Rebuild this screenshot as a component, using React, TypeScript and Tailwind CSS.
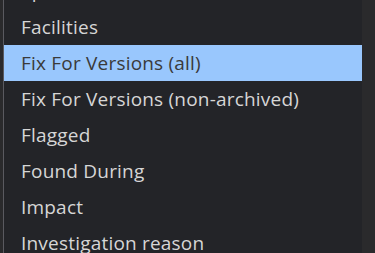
const items = [
  "Epic Link",
  "Facilities",
  "Fix For Versions (all)",
  "Fix For Versions (non-archived)",
  "Flagged",
  "Found During",
  "Impact",
  "Investigation reason",
];

const selected = "Fix For Versions (all)";

export default function App() {
  return (
    <div className="flex h-[253px] w-[375px] overflow-hidden bg-[#2a2a2c]">
      <div className="ml-[3px] w-px shrink-0 bg-[#5a5a60]" />
      <div className="h-full w-[358px] overflow-hidden bg-[#232428]">
        <ul className="-mt-[27px] flex flex-col">
          {items.map((item) => (
            <li
              key={item}
              className={
                item === selected
                  ? "flex h-9 items-center bg-[#99c7fd] pl-[17px] text-[19px] tracking-[0.2px] text-[#3a3a3a]"
                  : "flex h-9 items-center pl-[17px] text-[19px] tracking-[0.2px] text-[#d6d6d6]"
              }
              style={{ fontFamily: '"Open Sans", "Noto Sans", sans-serif' }}
            >
              {item}
            </li>
          ))}
        </ul>
      </div>
    </div>
  );
}
